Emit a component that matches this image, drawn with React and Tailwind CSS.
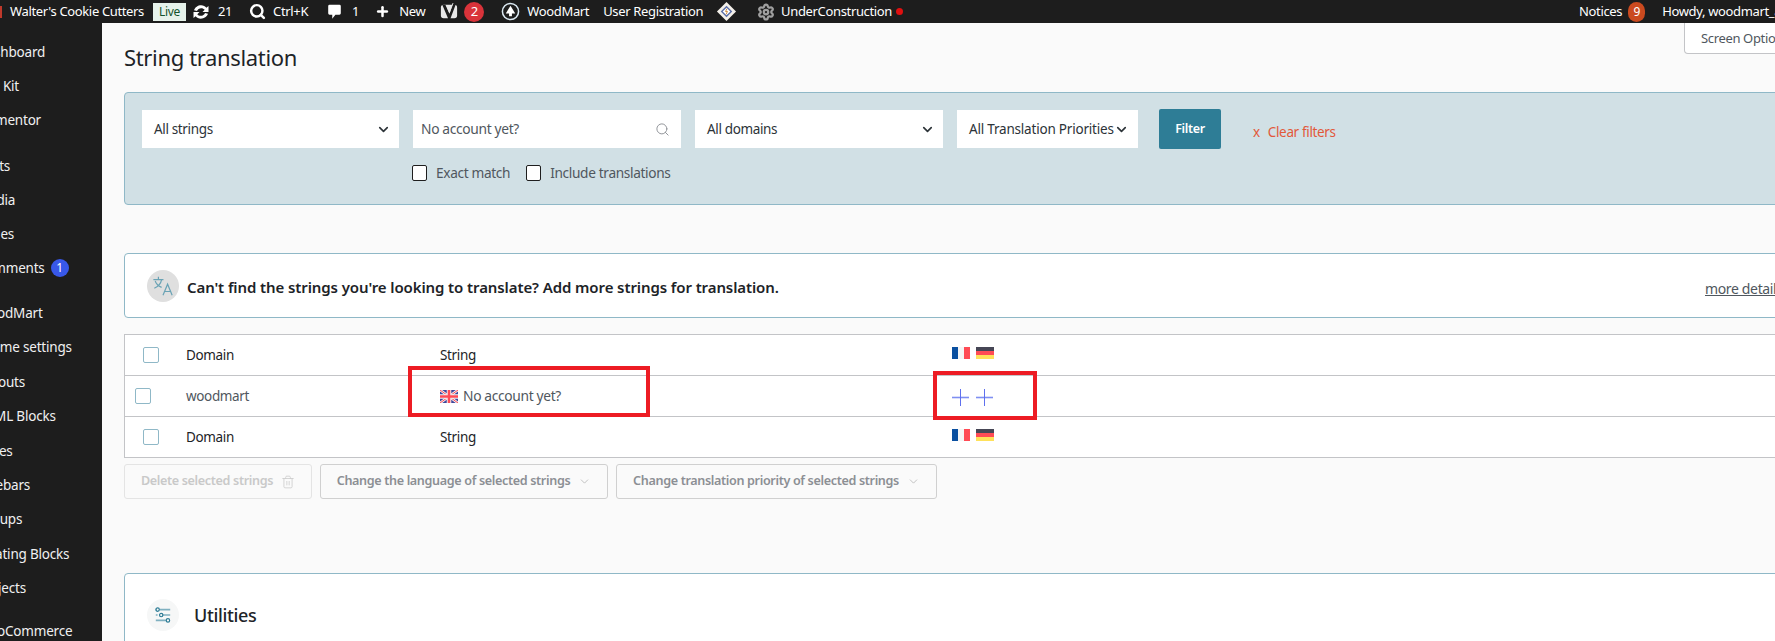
import React from 'react';
import { ChevronDown, Search, Settings, Plus, Trash2 } from 'lucide-react';

const sidebarGroups = [
  { gap: 'mt-0', row: 'h-[34px]', items: ['Dashboard', 'Site Kit', 'Elementor'] },
  { gap: 'mt-[12px]', row: 'h-[34px]', items: ['Posts', 'Media', 'Pages', 'Comments'] },
  { gap: 'mt-[11px]', row: 'h-[34.400px]', items: ['WoodMart', 'Theme settings', 'Layouts', 'HTML Blocks', 'Slides', 'Sidebars', 'Groups', 'Floating Blocks', 'Projects'] },
  { gap: 'mt-[9px]', row: 'h-[34px]', items: ['WooCommerce'] },
];

const Sync = () => (
  <svg viewBox="0 0 20 20" className="w-[20px] h-[20px] ml-[5px] text-white" fill="currentColor">
    <path d="M10.2 3.3c2.1 0 4 .9 5.2 2.4L17.5 4v6h-6l2.2-2.2c-.8-1-2.1-1.6-3.5-1.6-1.9 0-3.6 1.2-4.2 2.9L3 8.2c1-2.8 3.9-4.9 7.2-4.9z" />
    <path d="M9.8 16.7c-2.1 0-4-.9-5.2-2.4L2.5 16v-6h6l-2.2 2.2c.8 1 2.1 1.6 3.5 1.6 1.9 0 3.6-1.2 4.2-2.9l3 .9c-1 2.8-3.9 4.9-7.2 4.9z" />
  </svg>
);

const Comment = () => (
  <svg viewBox="0 0 16 20" className="w-[15px] h-[18px] ml-[19px] text-white" fill="currentColor">
    <path d="M2.5 2h11A1.5 1.5 0 0 1 15 3.500v8A1.5 1.5 0 0 1 13.500 13H9l-3.500 4.500V13h-3A1.500 1.500 0 0 1 1 11.500v-8A1.500 1.500 0 0 1 2.500 2z" />
  </svg>
);

const Yoast = () => (
  <svg viewBox="0 0 20 22" className="w-[18px] h-[20px] ml-[15px]">
    <rect x="1" y="3" width="18" height="15" rx="3" fill="#e8e8e8" />
    <path d="M6 3l4.500 10L15 0h3.500L11 20c-.6 1.500-2 2-4 2v-2.500c1 0 1.600-.3 2-1.200L2.500 3z" fill="#1d1d1d" />
    <path d="M7.500 4l3 7.500L14.500 1" stroke="#e8e8e8" strokeWidth="1" fill="none" />
  </svg>
);

const WoodMartIcon = () => (
  <svg viewBox="0 0 20 20" className="w-[19px] h-[19px] ml-[17px]">
    <circle cx="10" cy="10" r="8.500" fill="none" stroke="#dbe9f2" strokeWidth="1.600" />
    <path d="M10 4l5 8h-3.500v3h-3v-3H5z" fill="#fff" />
  </svg>
);

const Diamond = () => (
  <svg viewBox="0 0 22 22" className="w-[21px] h-[21px] ml-[13px]">
    <path d="M11 1l10 10-10 10L1 11z" fill="#f4f0ea" />
    <path d="M11 5l6 6-6 6-6-6z" fill="#5a6ea8" />
    <path d="M11 7l4 4-4 4-4-4z" fill="#fff" />
    <path d="M11.500 8l-1.500 3h2l-1.500 3" stroke="#d08a3c" strokeWidth="1" fill="none" />
  </svg>
);

const FlagFr = () => (
  <span className="flex w-[18px] h-[12px]">
    <span className="flex-1 bg-[#0a50a0]" />
    <span className="flex-1 bg-[#f5f5f5]" />
    <span className="flex-1 bg-[#ff4b55]" />
  </span>
);

const FlagDe = () => (
  <span className="flex flex-col w-[18px] h-[12px]">
    <span className="flex-1 bg-[#464655]" />
    <span className="flex-1 bg-[#ff4b55]" />
    <span className="flex-1 bg-[#ffe15a]" />
  </span>
);

const FlagUk = () => (
  <svg viewBox="0 0 18 13" className="w-[18px] h-[13px] shrink-0">
    <rect width="18" height="13" fill="#41479b" />
    <path d="M0 0l18 13M18 0L0 13" stroke="#f5f5f5" strokeWidth="2.600" />
    <path d="M0 0l18 13M18 0L0 13" stroke="#ff4b55" strokeWidth="1" />
    <path d="M9 0v13M0 6.500h18" stroke="#f5f5f5" strokeWidth="4.500" />
    <path d="M9 0v13M0 6.500h18" stroke="#ff4b55" strokeWidth="2.600" />
  </svg>
);

const Translate = () => (
  <svg viewBox="0 0 24 24" className="w-[22px] h-[22px] text-[#6aa3b5]" fill="none" stroke="currentColor" strokeWidth="1.300">
    <path d="M1.500 5h11M7 2v3M10.500 5c-.8 4-3.500 7.500-8 9.500M3.500 6.500c1 3 3.500 5.500 7 7" />
    <path d="M12 22l5-12 5 12M13.800 18h6.400" />
  </svg>
);

const Sliders = () => (
  <svg viewBox="0 0 20 20" className="w-[18px] h-[20px]" fill="none">
    <path d="M6 4h12M2 10h2M9 10h9M2 16h12" stroke="#7fb0c0" strokeWidth="1.800" />
    <path d="M2 4h1" stroke="#7fb0c0" strokeWidth="1.800" />
    <circle cx="4" cy="4" r="1.900" stroke="#2f7d96" strokeWidth="1.300" />
    <circle cx="8" cy="10" r="1.900" stroke="#2f7d96" strokeWidth="1.300" />
    <circle cx="15.500" cy="16" r="1.900" stroke="#2f7d96" strokeWidth="1.300" />
  </svg>
);

const AddIcon = () => (
  <svg viewBox="0 0 17 17" className="w-[17px] h-[17px]" fill="none">
    <path d="M0 8.500h17" stroke="#7f8ff2" strokeWidth="1.600" />
    <path d="M8.500 0v17" stroke="#5f70ee" strokeWidth="1" />
  </svg>
);

const SelectBox = ({ label, className }) => (
  <div className={`flex items-center justify-between bg-white h-[38px] text-[13.500px] text-[#2c3338] ${className}`}>
    <span>{label}</span>
    <ChevronDown className="w-[15px] h-[15px] text-[#2c3338]" strokeWidth={2.600} />
  </div>
);

const Check = ({ className = '' }) => (
  <span className={`block w-[15px] h-[16px] rounded-[2px] bg-white border border-[#1e1e1e] ${className}`} />
);

const RowCheck = () => (
  <span className="block w-[16px] h-[16px] rounded-[2px] bg-white border border-[#8fb8c7]" />
);

const StringRow = () => (
  <div className="grid grid-cols-[61px_254px_512px_1fr] items-center h-[40px] text-[13.500px] text-[#1d2327]">
    <div className="pl-[18px]"><RowCheck /></div>
    <div>Domain</div>
    <div>String</div>
    <div className="flex gap-[6px] -mt-[4px]"><FlagFr /><FlagDe /></div>
  </div>
);

export default function App() {
  return (
    <div className="relative w-[1775px] h-[641px] overflow-hidden bg-[#fafafa] font-['Noto_Sans',sans-serif] tracking-[-0.35px]">
      {/* Admin bar */}
      <div className="flex items-center justify-between h-[23px] bg-[#1d1d1d] text-white text-[13px] whitespace-nowrap">
        <div className="flex items-center">
          <span className="w-[2px] h-[12px] bg-[#c0392b]" />
          <span className="ml-[8px]">Walter's Cookie Cutters</span>
          <span className="ml-[9px] px-[6px] h-[18px] leading-[18px] bg-[#e6f2ea] text-[#14532d] text-[12px]">Live</span>
          <Sync />
          <span className="ml-[7px]">21</span>
          <Search className="w-[17px] h-[17px] ml-[17px]" strokeWidth={3.500} />
          <span className="ml-[7px]">Ctrl+K</span>
          <Comment />
          <span className="ml-[10px]">1</span>
          <Plus className="w-[15px] h-[15px] ml-[16px]" strokeWidth={4} />
          <span className="ml-[9px]">New</span>
          <Yoast />
          <span className="flex items-center justify-center ml-[6px] w-[20px] h-[20px] rounded-full bg-[#d9333a] text-[13px]">2</span>
          <WoodMartIcon />
          <span className="ml-[7px]">WoodMart</span>
          <span className="ml-[14px]">User Registration</span>
          <Diamond />
          <Settings className="w-[18px] h-[18px] ml-[20px] text-[#a0a0a0]" strokeWidth={3} />
          <span className="ml-[6px]">UnderConstruction</span>
          <span className="ml-[4px] w-[7px] h-[7px] rounded-full bg-[#e01010]" />
        </div>
        <div className="flex items-center w-[196px] shrink-0 overflow-hidden">
          <span className="shrink-0">Notices</span>
          <span className="flex items-center justify-center shrink-0 ml-[6px] w-[17px] h-[20px] rounded-full bg-[#ca4a1f] text-[12px]">9</span>
          <span className="shrink-0 ml-[17px]">Howdy, woodmart_admin</span>
        </div>
      </div>

      <div className="flex h-[618px]">
        {/* Sidebar */}
        <div className="w-[102px] shrink-0 bg-[#1d1d1d] overflow-hidden pt-[12px] text-[13.500px] tracking-[-0.2px] text-[#f0f0f1] whitespace-nowrap">
          <div className="-ml-[23px]">
            {sidebarGroups.map((group) => (
              <div key={group.items[0]} className={group.gap}>
                {group.items.map((item) => (
                  <div key={item} className={`flex items-center ${group.row}`}>
                    <span>{item}</span>
                    {item === 'Comments' && (
                      <span className="flex items-center justify-center ml-[6px] w-[18px] h-[18px] rounded-full bg-[#3858e9] text-white text-[12px]">1</span>
                    )}
                  </div>
                ))}
              </div>
            ))}
          </div>
        </div>

        {/* Main */}
        <div className="flex-1 pl-[22px] -mr-[20px] min-w-0">
          <div className="flex items-center h-[69px] pb-[1px]">
            <h1 className="text-[22px] font-normal text-[#1d2327]">String translation</h1>
          </div>

          {/* Filters */}
          <div className="h-[113px] bg-[#d1e0e5] border border-[#8fb8c7] rounded-[4px] pl-[17px] pt-[17px]">
            <div className="flex items-center h-[38px]">
              <SelectBox label="All strings" className="w-[257px] pl-[12px] pr-[8px]" />
              <div className="flex items-center justify-between ml-[14px] w-[268px] h-[38px] bg-white pl-[8px] pr-[11px] text-[13.800px] text-[#50575e]">
                <span>No account yet?</span>
                <Search className="w-[15px] h-[15px] text-[#8c8f94]" strokeWidth={1.500} />
              </div>
              <SelectBox label="All domains" className="ml-[14px] w-[248px] pl-[12px] pr-[8px]" />
              <SelectBox label="All Translation Priorities" className="ml-[14px] w-[181px] pl-[12px] pr-[9px] tracking-[-0.2px]" />
              <button className="shrink-0 ml-[21px] w-[62px] h-[40px] bg-[#2e7d96] rounded-[2px] text-white text-[12.500px] font-semibold">Filter</button>
              <span className="ml-[32px] mt-[6px] text-[13.500px] text-[#e2583a]">x</span>
              <span className="ml-[8px] mt-[6px] text-[13.500px] text-[#e2583a]">Clear filters</span>
            </div>
            <div className="flex items-center ml-[270px] mt-[15px] text-[13.700px] text-[#50575e]">
              <Check />
              <span className="ml-[9px]">Exact match</span>
              <Check className="ml-[16px]" />
              <span className="ml-[9px]">Include translations</span>
            </div>
          </div>

          {/* Notice */}
          <div className="flex items-center justify-between mt-[48px] h-[65px] bg-white border border-[#8fb8c7] rounded-[4px] pl-[22px] pr-0">
            <div className="flex items-center">
              <span className="flex items-center justify-center w-[32px] h-[32px] rounded-full bg-[#dfdfdf]"><Translate /></span>
              <span className="ml-[8px] mt-[3px] text-[15px] tracking-[-0.1px] font-semibold text-[#1d2327]">Can't find the strings you're looking to translate? Add more strings for translation.</span>
            </div>
            <span className="w-[89px] shrink-0 mt-[5px] text-[14px] text-[#50575e] underline whitespace-nowrap">more details</span>
          </div>

          {/* Strings table */}
          <div className="mt-[16px] bg-white border border-[#c3c4c7]">
            <StringRow />
            <div className="grid grid-cols-[61px_254px_512px_1fr] items-center h-[42px] border-y border-[#c3c4c7] text-[13.500px] text-[#50575e]">
              <div className="pl-[10px]"><RowCheck /></div>
              <div>woodmart</div>
              <div className="flex items-center gap-[5px]"><FlagUk /><span className="text-[13.800px]">No account yet?</span></div>
              <div className="flex gap-[7px] mt-[2px]">
                <AddIcon />
                <AddIcon />
              </div>
            </div>
            <StringRow />
          </div>

          {/* Bulk actions */}
          <div className="flex mt-[6px] gap-[8px] text-[12.600px] font-semibold whitespace-nowrap">
            <div className="flex items-center justify-center w-[188px] h-[35px] border border-[#e4e4e4] rounded-[3px] text-[#c9c9c9]">
              Delete selected strings
              <Trash2 className="w-[14px] h-[14px] ml-[8px]" strokeWidth={1.300} />
            </div>
            <div className="flex items-center justify-center w-[288px] h-[35px] border border-[#d0d0d0] rounded-[3px] text-[#8c8f94]">
              Change the language of selected strings
              <ChevronDown className="w-[13px] h-[13px] ml-[8px] text-[#b5b5b5]" strokeWidth={1.500} />
            </div>
            <div className="flex items-center justify-center w-[321px] h-[35px] border border-[#d0d0d0] rounded-[3px] text-[#8c8f94]">
              Change translation priority of selected strings
              <ChevronDown className="w-[13px] h-[13px] ml-[8px] text-[#b5b5b5]" strokeWidth={1.500} />
            </div>
          </div>

          {/* Utilities */}
          <div className="flex items-start mt-[74px] h-[120px] bg-white border border-[#8fb8c7] rounded-[4px] pl-[22px] pt-[25px]">
            <span className="flex items-center justify-center w-[32px] h-[32px] rounded-full bg-[#f6f7f7]"><Sliders /></span>
            <h2 className="ml-[15px] text-[18px] leading-[32px] font-medium text-[#1d2327]">Utilities</h2>
          </div>
        </div>
      </div>

      {/* Screen options tab */}
      <div className="absolute top-[23px] left-[1684px] w-[110px] h-[31px] bg-white border border-t-0 border-[#c3c4c7] rounded-bl-[4px] pl-[16px] leading-[31px] text-[13px] text-[#50575e] whitespace-nowrap">Screen Options</div>

      {/* Red annotation boxes from the screenshot */}
      <div className="absolute left-[408px] top-[366px] w-[242px] h-[51px] border-[4px] border-[#ed1c24]" />
      <div className="absolute left-[933px] top-[371px] w-[104px] h-[49px] border-[4px] border-[#ed1c24]" />
    </div>
  );
}
